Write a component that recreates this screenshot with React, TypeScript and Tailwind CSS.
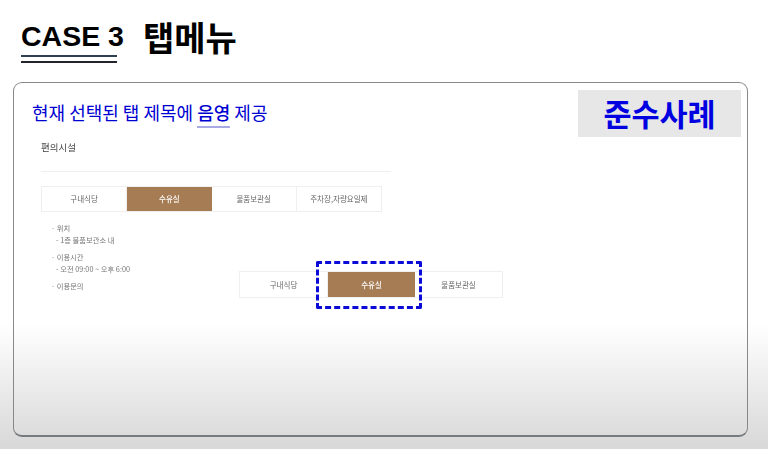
const ko = "font-['Noto_Sans_CJK_KR','Noto_Sans',sans-serif]";

function Tabs({ items, active, className }: { items: string[]; active: number; className: string }) {
  return (
    <div className={`flex border border-[#efefef] text-[7.5px] text-[#666] blur-[0.4px] ${className}`}>
      {items.map((item, i) => (
        <div
          key={item}
          className={
            i === active
              ? "flex-1 flex items-center justify-center bg-[#a67c55] text-white font-medium"
              : "flex-1 flex items-center justify-center border-r border-[#efefef] last:border-r-0"
          }
        >
          {item}
        </div>
      ))}
    </div>
  );
}

export default function App() {
  return (
    <div className={`relative w-[768px] h-[449px] overflow-hidden bg-white text-black ${ko}`}>
      <div className="pointer-events-none absolute inset-x-0 bottom-0 h-[125px] bg-gradient-to-b from-[#ffffff] to-[#d8d8d8]" />

      <header className="relative flex items-start h-[82px] pl-[21px] pt-[14px]">
        <div className="w-[96px]">
          <h1 className="w-[110px] font-['Liberation_Sans',sans-serif] font-bold text-[28.5px] leading-[44px] whitespace-nowrap">CASE 3</h1>
          <div className="h-[8px] border-y-[2.5px] border-t-[#2f4050] border-b-[#22262c] mt-[-3px]" />
        </div>
        <h2 className="ml-[26px] mt-[1px] text-[34px] leading-[44px] font-bold">탭메뉴</h2>
      </header>

      <section className="relative mx-[13px] h-[355px] w-[735px] rounded-[9px] border border-[#85898c] border-b-2 border-b-[#777b7e] pl-[18px] pt-[15px]">
        <p className="text-[18px] leading-[28px] text-[#0000d2]">
          현재 선택된 탭 제목에{" "}
          <span className="font-medium border-b-2 border-[#a9a9e4] pb-[1px]">음영</span> 제공
        </p>
        <div className="absolute right-[6px] top-[7px] flex h-[47px] w-[163px] items-center justify-center bg-[#e7e7e7] text-[30.5px] font-bold text-[#0000e0]">
          준수사례
        </div>

        <div className="ml-[9px] mt-[13px] w-[350px]">
          <p className="text-[9.5px] leading-[16px] text-[#444] blur-[0.3px]">편의시설</p>
          <div className="mt-[16px] h-px bg-[#eeeeee]" />
          <Tabs items={["구내식당", "수유실", "물품보관실", "주차장,자량요일제"]} active={1} className="mt-[14px] h-[26px] w-[341px]" />
          <ul className="mt-[10px] pl-[10px] text-[7.3px] leading-[12px] text-[#777] blur-[0.35px]">
            <li>· 위치</li>
            <li className="pl-[5px]">- 1층 물품보관소 내</li>
            <li className="mt-[5px]">· 이용시간</li>
            <li className="pl-[5px]">- 오전 09:00 ~ 오후 6:00</li>
            <li className="mt-[5px]">· 이용문의</li>
          </ul>
        </div>

        {/* zoomed-in copy of the tabs, sits over the screenshot */}
        <Tabs items={["구내식당", "수유실", "물품보관실"]} active={1} className="absolute left-[225px] top-[188px] h-[27px] w-[264px]" />
        <div className="absolute left-[302px] top-[178px] h-[48px] w-[106px] rounded-[2px] border-[3px] border-dashed border-[#0b0bd8]" />
      </section>
    </div>
  );
}
